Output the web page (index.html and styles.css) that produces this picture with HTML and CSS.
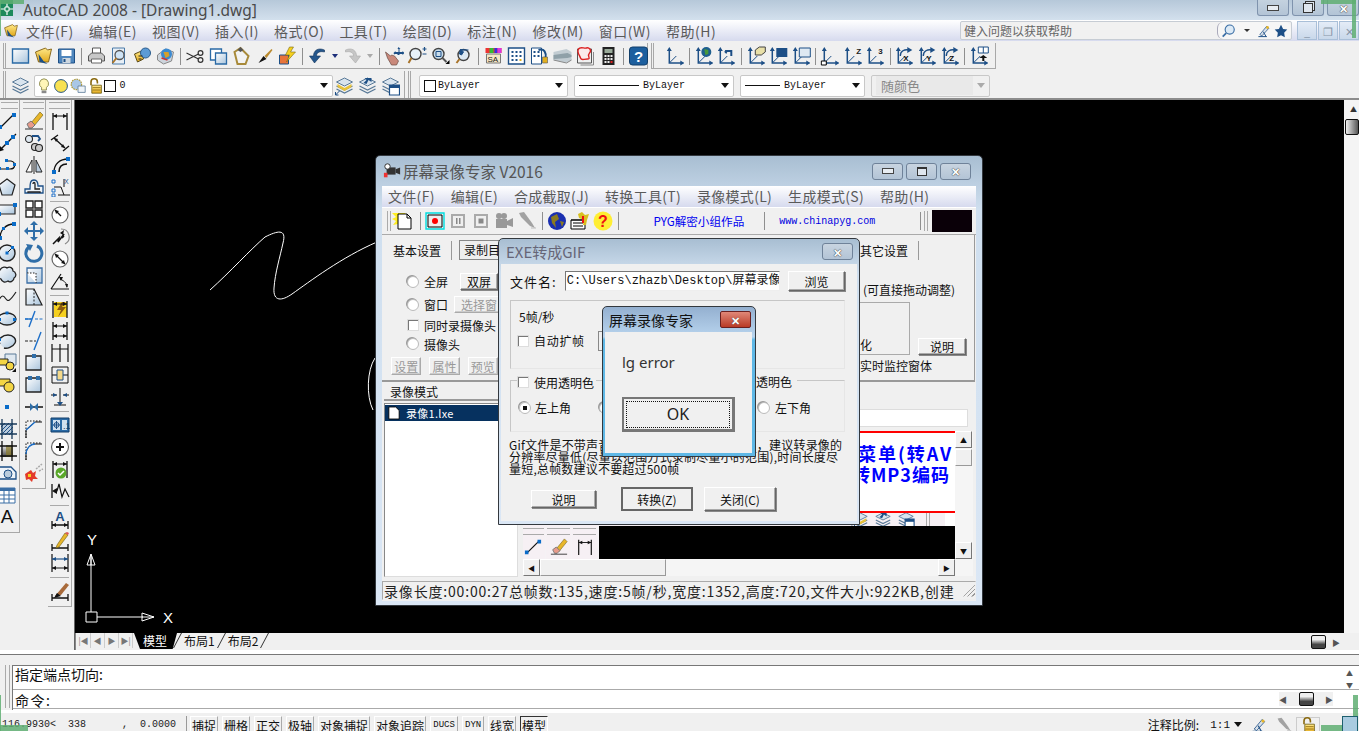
FILE: index.html
```html
<!DOCTYPE html>
<html lang="zh">
<head>
<meta charset="UTF-8">
<title>AutoCAD 2008 - [Drawing1.dwg]</title>
<link rel="stylesheet" href="styles.css">
</head>
<body>
<svg class="sprite" width="0" height="0">
  <defs>
    <linearGradient id="gb" x1="0" y1="0" x2="1" y2="1"><stop offset="0" stop-color="#fff"/><stop offset="1" stop-color="#a9c4dc"/></linearGradient>
    <linearGradient id="gy" x1="0" y1="0" x2="0" y2="1"><stop offset="0" stop-color="#ffe98a"/><stop offset="1" stop-color="#e2a91c"/></linearGradient>
    <linearGradient id="gk" x1="0" y1="0" x2="0" y2="1"><stop offset="0" stop-color="#f2f2f2"/><stop offset=".5" stop-color="#999"/><stop offset="1" stop-color="#444"/></linearGradient>
    <symbol id="cad" viewBox="0 0 13 16"><path d="M0 0h13v16H0z" fill="#1d8a5c"/><path d="M0 9h13M7 3v12" stroke="#fff" stroke-width="1.200"/><path d="M5 7h4v4H5z" fill="#1d8a5c" stroke="#fff"/></symbol>
    <symbol id="new" viewBox="0 0 20 20"><path d="M2 3h16v14H2z" fill="url(#gb)" stroke="#2a6aa5" stroke-width="1.4"/></symbol>
    <symbol id="open" viewBox="0 0 20 20"><path d="M2 6l10-4 2 2 4-1-3 13H5z" fill="url(#gy)" stroke="#8a6a20"/><path d="M5 8l5 7 4 3-8-2z" fill="#1d4f86"/></symbol>
    <symbol id="save" viewBox="0 0 20 20"><path d="M2 3h16v14H2z" fill="#4f86bd" stroke="#1d4f86"/><path d="M5 4h10v6H5z" fill="#fff"/><path d="M6 12h8v5H6z" fill="#cfd8e0"/><path d="M7 13h2v3H7z" fill="#1d4f86"/></symbol>
    <symbol id="print" viewBox="0 0 20 20"><path d="M6 2h8v6H6z" fill="#fff" stroke="#555"/><path d="M2 10l3-3h10l3 3v5H2z" fill="#c7c7c7" stroke="#555"/><path d="M5 13h10v4H5z" fill="#fff" stroke="#666"/></symbol>
    <symbol id="prev" viewBox="0 0 20 20"><path d="M3 2h12v16H3z" fill="#e8eff6" stroke="#4a7aa8"/><circle cx="10" cy="9" r="4.5" fill="#cfe4f6" stroke="#555" stroke-width="1.3"/><path d="M7 12l-4 5" stroke="#a8742a" stroke-width="2"/></symbol>
    <symbol id="publish" viewBox="0 0 20 20"><path d="M2 8l7-3 2 8-6 3z" fill="url(#gy)" stroke="#5a4a18"/><circle cx="13" cy="7" r="5" fill="#5c9bd6" stroke="#2a5c8c"/><path d="M6 10h4M6 13h3" stroke="#222"/></symbol>
    <symbol id="dwf" viewBox="0 0 20 20"><path d="M2 9l8-6 8 3-2 9-8 3-6-4z" fill="#cdd5dd" stroke="#888"/><circle cx="11" cy="8" r="5.5" fill="#3c8ad0"/><path d="M8 6l5 0 1 4-4 2z" fill="#d8a02a"/><path d="M6 12l6 2" stroke="#c33" stroke-width="1.5"/></symbol>
    <symbol id="cut" viewBox="0 0 20 20" fill="none" stroke="#333" stroke-width="1.2"><circle cx="15" cy="7" r="2.4"/><circle cx="15" cy="14" r="2.4"/><path d="M13 8L1 14M13 13L1 7"/></symbol>
    <symbol id="copy" viewBox="0 0 20 20"><path d="M2 3h11v11H2z" fill="#fff" stroke="#2a6aa5" stroke-width="1.3"/><path d="M7 7h11v11H7z" fill="url(#gb)" stroke="#2a6aa5" stroke-width="1.3"/></symbol>
    <symbol id="paste" viewBox="0 0 20 20"><path d="M3 6l6-4 8 8-3 8H6z" fill="#f3f3f3" stroke="#a88a3a" stroke-width="2"/><path d="M6 4l3-3 3 3-3 2z" fill="#555"/></symbol>
    <symbol id="brush" viewBox="0 0 20 20"><path d="M10 10l7-7 1 1-6 8z" fill="#b9892e"/><path d="M4 17l5-7 3 3z" fill="#111"/></symbol>
    <symbol id="match" viewBox="0 0 20 20"><path d="M2 9h9v9H2z" fill="#e8743a" stroke="#1d4f86"/><path d="M12 1l-4 8h4l-3 7 9-10h-5l3-5z" fill="#f5d020" stroke="#7a6a10" stroke-width=".6"/></symbol>
    <symbol id="undo" viewBox="0 0 20 20"><path d="M17 4c-7-3-11 1-11 6H2l5 7 6-7H9c0-4 4-5 8-4z" fill="#24568c" stroke="#12345a" stroke-width=".6"/></symbol>
    <symbol id="redo" viewBox="0 0 20 20"><path d="M3 4c7-3 11 1 11 6h4l-5 7-6-7h4c0-4-4-5-8-4z" fill="#c6c6c6" stroke="#aaa" stroke-width=".6"/></symbol>
    <symbol id="pan" viewBox="0 0 20 20"><path d="M1 6l5 4 1-1 3 1 4 5-2 4H7L3 12z" fill="#c9897b" stroke="#6a4a44" stroke-width=".7"/><path d="M14 1l2 2h-1v3h3V5l2 2-2 2V8h-3v1h-2V8h-3v1L9 7l2-2v1h3V3h-1z" fill="#1d4f86"/></symbol>
    <symbol id="zrt" viewBox="0 0 20 20"><circle cx="8" cy="8" r="5.5" fill="#e7f1f9" stroke="#444" stroke-width="1.4"/><path d="M4 12l-3 5" stroke="#a8742a" stroke-width="2"/><path d="M15 3h4M17 1v4M15 8h4" stroke="#1d4f86" stroke-width="1.2"/></symbol>
    <symbol id="zwin" viewBox="0 0 20 20"><circle cx="8" cy="8" r="5.5" fill="#c9dcea" stroke="#444" stroke-width="1.4"/><path d="M5.500 5.500h5v5h-5z" fill="none" stroke="#1d4f86"/><path d="M12 12l4 4" stroke="#555" stroke-width="2"/><path d="M15 18h4v-4z" fill="#000"/></symbol>
    <symbol id="zprev" viewBox="0 0 20 20"><circle cx="10" cy="9" r="5.500" fill="#dce9f3" stroke="#444" stroke-width="1.4"/><path d="M6 13l-3 4" stroke="#a8742a" stroke-width="2"/><path d="M15 4H8l2 2-2 3-2-1 1-5" fill="#1d4f86" stroke="#1d4f86"/></symbol>
    <symbol id="props" viewBox="0 0 20 20"><path d="M2 2h16v5H2z" fill="#e33"/><path d="M6 2h4v5H6z" fill="#3b3"/><path d="M11 2h3v5h-3z" fill="#33d"/><path d="M14 2h4v5h-4z" fill="#d3d"/><path d="M3 8h14v9H3z" fill="#f6e7c5" stroke="#777"/><text x="4" y="16" font-size="8" font-family="Liberation Sans" fill="#222">SA</text></symbol>
    <symbol id="sheet" viewBox="0 0 20 20"><path d="M2 2h16v16H2z" fill="#fff" stroke="#1d4f86" stroke-width="1.4"/><path d="M5 5h2v2H5zM9 5h2v2H9zM13 5h2v2h-2zM5 9h2v2H5zM9 9h2v2H9zM13 9h2v2h-2zM5 13h2v2H5zM9 13h2v2H9z" fill="#1d4f86"/><path d="M13 13h2v2h-2z" fill="#e3b020"/></symbol>
    <symbol id="tool" viewBox="0 0 20 20"><path d="M2 2h10v16H2z" fill="#fff" stroke="#1d4f86"/><path d="M4 5h2v2H4zM8 5h2v2H8zM4 9h2v2H4zM8 9h2v2H8z" fill="#1d4f86"/><path d="M9 4c6-2 8 3 7 8" fill="none" stroke="#1d4f86" stroke-width="2"/><path d="M13 11h5v6h-5z" fill="#e3b020" stroke="#555" stroke-width=".6"/></symbol>
    <symbol id="pipe" viewBox="0 0 20 20"><path d="M1 6l13-3 5 3v8l-5 3-13-3z" fill="#c2ccd2"/><path d="M1 9l14-2 4 2v2l-4 1-14 1z" fill="#8fa0a8"/><path d="M1 14l13 3 5-3" stroke="#8a8a8a" fill="none"/></symbol>
    <symbol id="markup" viewBox="0 0 20 20"><path d="M2 3h14v14H2z" fill="none" stroke="#555"/><path d="M18 6v13H5" fill="none" stroke="#888"/><path d="M3 3c2-3 6 0 8-1s6 2 3 5 2 6-2 6-6 2-7-1-4-6-2-9z" fill="#fbe9e9" stroke="#d22" stroke-width="1.4"/></symbol>
    <symbol id="calc" viewBox="0 0 20 20"><path d="M4 1h12v18H4z" fill="#222"/><path d="M6 3h8v4H6z" fill="#9a9"/><path d="M6 9h2v2H6zM9 9h2v2H9zM12 9h2v2h-2zM6 12h2v2H6zM9 12h2v2H9zM12 12h2v2h-2zM6 15h2v2H6zM9 15h2v2H9z" fill="#eee"/><path d="M12 15h2v2h-2z" fill="#d22"/></symbol>
    <symbol id="help" viewBox="0 0 20 20"><rect x="1" y="1" width="18" height="18" rx="3" fill="#1d5f9e" stroke="#123f6a"/><text x="10" y="16" font-size="15" font-weight="700" font-family="Liberation Sans" text-anchor="middle" fill="#fff">?</text></symbol>
    <symbol id="ucs" viewBox="0 0 20 20"><path d="M4 3v14h14" fill="none" stroke="#1d4f86" stroke-width="1.500"/><path d="M4 1l-2.500 4h5zM19 17l-4-2.500v5z" fill="#1d4f86"/><path d="M4 17l7-7" stroke="#1d4f86"/></symbol>
    <symbol id="ucsw" viewBox="0 0 20 20"><use href="#ucs"/><circle cx="12" cy="6" r="5" fill="#1f5f8f"/><path d="M10 3l4 1 0 4-3 1z" fill="#4a9a3a"/></symbol>
    <symbol id="ucsb" viewBox="0 0 20 20"><use href="#ucs"/><path d="M16 10V4H9l-1 2 2 2 1-2h3v4zM7 8L11 5" fill="#1d4f86"/></symbol>
    <symbol id="ucsc" viewBox="0 0 20 20"><use href="#ucs"/><path d="M9 9V4l4-3h6v5l-4 3z" fill="#e9e0a8" stroke="#444"/></symbol>
    <symbol id="ucsf" viewBox="0 0 20 20"><use href="#ucs"/><path d="M8 2h11v9H8z" fill="#1d4f86"/></symbol>
    <symbol id="ucsv" viewBox="0 0 20 20"><use href="#ucs"/><path d="M8 2h11v9H8z" fill="#dfe9f2" stroke="#1d4f86"/></symbol>
    <symbol id="ucso" viewBox="0 0 20 20"><use href="#ucs"/><path d="M1 15h5v4H1z" fill="#fff" stroke="#000"/></symbol>
    <symbol id="ucsz" viewBox="0 0 20 20"><use href="#ucs"/><text x="13" y="8" font-size="8" font-weight="700" font-family="Liberation Sans" fill="#222">Z</text></symbol>
    <symbol id="ucs3" viewBox="0 0 20 20"><use href="#ucs"/><text x="13" y="8" font-size="8" font-weight="700" font-family="Liberation Sans" fill="#222">3</text></symbol>
    <symbol id="rotx" viewBox="0 0 20 20"><use href="#ucs"/><path d="M6 10c0-5 4-7 9-6" fill="none" stroke="#1d4f86" stroke-width="1.400"/><path d="M13 1l5 3-5 3z" fill="#1d4f86"/><text x="9" y="15" font-size="8" font-weight="700" font-family="Liberation Sans" fill="#111">X</text></symbol>
    <symbol id="roty" viewBox="0 0 20 20"><use href="#ucs"/><path d="M6 10c0-5 4-7 9-6" fill="none" stroke="#1d4f86" stroke-width="1.400"/><path d="M13 1l5 3-5 3z" fill="#1d4f86"/><text x="9" y="15" font-size="8" font-weight="700" font-family="Liberation Sans" fill="#111">Y</text></symbol>
    <symbol id="rotz" viewBox="0 0 20 20"><use href="#ucs"/><path d="M6 10c0-5 4-7 9-6" fill="none" stroke="#1d4f86" stroke-width="1.400"/><path d="M13 1l5 3-5 3z" fill="#1d4f86"/><text x="9" y="15" font-size="8" font-weight="700" font-family="Liberation Sans" fill="#111">Z</text></symbol>
    <symbol id="ucsm" viewBox="0 0 20 20"><use href="#ucs"/><path d="M9 1h10v6H9zM14 1v6" fill="#fff" stroke="#1d4f86"/><path d="M14 9l4 3h-3v3h-2v-3h-3z" fill="#111"/></symbol>
    <symbol id="stack" viewBox="0 0 20 20"><path d="M2 6l8-4 8 4-8 4z" fill="#d9e4ee" stroke="#5a7a98"/><path d="M2 10l8 4 8-4M2 13l8 4 8-4" fill="none" stroke="#5a7a98" stroke-width="1.300"/></symbol>
    <symbol id="bulb" viewBox="0 0 20 20"><path d="M10 1a6 6 0 0 0-3 11v3h6v-3a6 6 0 0 0-3-11z" fill="#fff6b8" stroke="#7a7a3a"/><path d="M7 16h6v3H7z" fill="#8a8a8a"/></symbol>
    <symbol id="sun" viewBox="0 0 20 20"><circle cx="10" cy="10" r="8" fill="#f8e152" stroke="#1d4f86" stroke-width="1.200"/></symbol>
    <symbol id="freeze" viewBox="0 0 20 20"><circle cx="8" cy="8" r="6.500" fill="#a9c7e6" stroke="#b09a3a" stroke-width="1.500" stroke-dasharray="2 1"/><path d="M10 10h9v8h-9z" fill="#eef3f8" stroke="#5a7a98"/></symbol>
    <symbol id="lock" viewBox="0 0 20 20"><path d="M5 9V5a4 4 0 0 1 8 0v2" fill="none" stroke="#8a6a10" stroke-width="2"/><path d="M6 9h12v10H6z" fill="url(#gy)" stroke="#6a5a10"/><path d="M7 12h10M7 15h10" stroke="#8a6a10"/></symbol>
    <symbol id="laycur" viewBox="0 0 20 20"><use href="#stack"/><path d="M3 8l7 4 7-4v3l-7 4-7-4z" fill="#e8c33a"/><path d="M1 19l4-4M1 16v3h3" stroke="#1d4f86" fill="none"/></symbol>
    <symbol id="laypre" viewBox="0 0 20 20"><use href="#stack"/><path d="M14 2H7l2 2-3 3 3 1 2-4 3 2z" fill="#1d4f86"/></symbol>
    <symbol id="laywin" viewBox="0 0 20 20"><use href="#stack"/><path d="M9 9h10v10H9z" fill="#fff" stroke="#1d4f86" stroke-width="1.200"/><path d="M9 9h10v3H9z" fill="#1d4f86"/></symbol>
    <symbol id="line" viewBox="0 0 20 20"><path d="M4 16L16 4" stroke="#111" stroke-width="1.300"/><path d="M1 14h4v4H1zM15 2h4v4h-4z" fill="#0a6cc8"/></symbol>
    <symbol id="ray" viewBox="0 0 20 20"><path d="M1 19L19 1" stroke="#111" stroke-width="1.300"/><path d="M8 8h4v4H8zM14 2h4v4h-4z" fill="#0a6cc8"/><path d="M1 19l2-6 4 4z" fill="#111"/></symbol>
    <symbol id="pline" viewBox="0 0 20 20"><path d="M3 14h10c6 0 6-7 1-8l-5 0" fill="none" stroke="#111" stroke-width="1.200"/><path d="M1 12h3v3H1zM9 12h3v3H9zM8 4h3v3H8zM16 8h3v3h-3z" fill="#0a6cc8"/></symbol>
    <symbol id="penta" viewBox="0 0 20 20"><path d="M10 2l8 6-3 10H5L2 8z" fill="url(#gb)" stroke="#222" stroke-width="1.200"/></symbol>
    <symbol id="rect" viewBox="0 0 20 20"><path d="M2 6h16v9H2z" fill="url(#gb)" stroke="#222" stroke-width="1.200"/><path d="M16 4h4v4h-4zM0 13h4v4H0z" fill="#0a6cc8"/></symbol>
    <symbol id="arc" viewBox="0 0 20 20"><path d="M3 17C3 9 9 3 17 3" fill="none" stroke="#111" stroke-width="1.300"/><path d="M1 15h4v4H1zM15 1h4v4h-4zM5 6h3v3H5z" fill="#0a6cc8"/></symbol>
    <symbol id="circle" viewBox="0 0 20 20"><circle cx="10" cy="10" r="8" fill="url(#gb)" stroke="#222" stroke-width="1.400"/><path d="M10 10l5-5" stroke="#111"/><path d="M8.500 8.500h3v3h-3zM14 3h3v3h-3z" fill="#0a6cc8"/></symbol>
    <symbol id="cloud" viewBox="0 0 20 20"><path d="M3 5c2-4 6-3 7-2 3-2 6 0 6 3 3 1 4 5 1 7 0 3-4 5-6 3-3 2-6 1-7-2-3-1-4-6-1-9z" fill="url(#gb)" stroke="#222" stroke-width="1.300"/></symbol>
    <symbol id="spline" viewBox="0 0 20 20"><path d="M1 15c4-9 6-6 8-3s4 2 10-7" fill="none" stroke="#222" stroke-width="1.200"/></symbol>
    <symbol id="ellipse" viewBox="0 0 20 20"><ellipse cx="10" cy="10" rx="9" ry="6" fill="url(#gb)" stroke="#222" stroke-width="1.400"/><path d="M1 9h3v3H1zM16 9h3v3h-3zM8.500 2.500h3v3h-3z" fill="#0a6cc8"/></symbol>
    <symbol id="earc" viewBox="0 0 20 20"><path d="M3 13C0 8 6 4 11 4s9 4 7 8-8 6-11 5" fill="url(#gb)" stroke="#222" stroke-width="1.400"/><path d="M1 7h3v3H1z" fill="#0a6cc8"/></symbol>
    <symbol id="insert" viewBox="0 0 20 20"><path d="M8 1h11v11H8z" fill="#dfe8f0" stroke="#5a7a98"/><path d="M1 6h10v6H1z" fill="#f3d544" stroke="#222"/><circle cx="13" cy="13" r="4" fill="#f3d544" stroke="#222"/><path d="M15 19h4v-4z" fill="#111"/></symbol>
    <symbol id="block" viewBox="0 0 20 20"><path d="M1 4h12v7H1z" fill="#f3d544" stroke="#222"/><circle cx="12" cy="12" r="5" fill="#f3d544" stroke="#222"/><path d="M0 1h3v3H0z" fill="#0a6cc8"/></symbol>
    <symbol id="point" viewBox="0 0 20 20"><path d="M8 8h4v4H8z" fill="#0a6cc8"/></symbol>
    <symbol id="hatch" viewBox="0 0 20 20"><path d="M4 4h12v12H4z" fill="#b9cbdc"/><path d="M4 8l4-4M4 12l8-8M4 16L16 4M8 16l8-8M12 16l4-4" stroke="#1d4f86"/><path d="M5 0v20M15 0v20M0 5h20M0 15h20" stroke="#1a3a5a" stroke-width="1.300"/></symbol>
    <symbol id="grad" viewBox="0 0 20 20"><path d="M4 4h12v12H4z" fill="url(#gk)"/><path d="M9 4h7v12H9z" fill="#8a7a2a" opacity=".7"/><path d="M5 0v20M15 0v20M0 5h20M0 15h20" stroke="#111" stroke-width="1.300"/></symbol>
    <symbol id="region" viewBox="0 0 20 20"><path d="M1 4h13l5 5v7H1z" fill="#eef3f8" stroke="#1d4f86" stroke-width="1.300"/><circle cx="11" cy="11" r="4" fill="#b9cbdc" stroke="#1d4f86"/></symbol>
    <symbol id="table" viewBox="0 0 20 20"><path d="M2 3h16v15H2z" fill="#fff" stroke="#3a6ea5"/><path d="M2 3h16v3H2z" fill="#3a6ea5"/><path d="M7 6v12M12 6v12M2 10h16M2 14h16" stroke="#3a6ea5"/></symbol>
    <symbol id="erase" viewBox="0 0 20 20"><path d="M7 12L16 1l3 3-9 11z" fill="#e8b62a" stroke="#6a5a10" stroke-width=".6"/><path d="M3 13l4-3 4 4-3 3H5z" fill="#e89a8a" stroke="#777"/><path d="M1 18h18" stroke="#333"/></symbol>
    <symbol id="copyc" viewBox="0 0 20 20" fill="#dfe8f0" stroke="#222" stroke-width="1.100"><circle cx="5" cy="6" r="3.500"/><circle cx="11" cy="14" r="3.500" fill="#c9c9c9"/><circle cx="15" cy="15" r="3.500" fill="#c9c9c9"/><path d="M8 3h6l2 3-2 2" fill="none" stroke="#1d4f86" stroke-width="1.800"/></symbol>
    <symbol id="mirror" viewBox="0 0 20 20"><path d="M10 1v18" stroke="#222"/><path d="M8 5v12H2z" fill="#fff" stroke="#222"/><path d="M12 5v12h6z" fill="#b9cbdc" stroke="#222"/></symbol>
    <symbol id="offset" viewBox="0 0 20 20" fill="none" stroke="#1d4f86" stroke-width="1.300"><path d="M1 12h5c0-5 0-9 4-9s4 4 4 6h5v7H1z" fill="#eef3f8"/><path d="M4 16v-1h12v1" stroke="#222"/><path d="M9 7c0-2 2-2 2 0v5h5" stroke="#222"/></symbol>
    <symbol id="array" viewBox="0 0 20 20" fill="#fff" stroke="#222" stroke-width="1.400"><path d="M2 2h7v7H2zM11 2h7v7h-7zM2 11h7v7H2zM11 11h7v7h-7z"/></symbol>
    <symbol id="move" viewBox="0 0 20 20"><path d="M10 0l4 4h-3v5h5V6l4 4-4 4v-3h-5v5h3l-4 4-4-4h3v-5H4v3l-4-4 4-4v3h5V4H6z" fill="#2f6ea8"/></symbol>
    <symbol id="rotate" viewBox="0 0 20 20"><path d="M5 4a8 8 0 1 0 8-1" fill="none" stroke="#2f6ea8" stroke-width="3"/><path d="M2 1l7 1-3 6z" fill="#2f6ea8"/></symbol>
    <symbol id="scale" viewBox="0 0 20 20"><path d="M3 3h15v15H3z" fill="url(#gb)" stroke="#3a6ea5" stroke-width="1.300"/><path d="M3 8h9v10" fill="#fff" stroke="#222" stroke-dasharray="1.500 1.500"/></symbol>
    <symbol id="stretch" viewBox="0 0 20 20"><path d="M2 2h8l8 16H2z" fill="url(#gb)" stroke="#222" stroke-width="1.200"/><path d="M10 2v16" stroke="#222" stroke-dasharray="2 1.500"/></symbol>
    <symbol id="trim" viewBox="0 0 20 20"><path d="M1 10h6M11 10h8" stroke="#1d6fc8" stroke-width="1.200" stroke-dasharray="3 1.500"/><path d="M5 18L11 2" stroke="#1d6fc8" stroke-width="1.400"/><path d="M1 10h7" stroke="#1d6fc8" stroke-width="1.400"/></symbol>
    <symbol id="extend" viewBox="0 0 20 20"><path d="M1 10h11" stroke="#222" stroke-dasharray="3 1.500"/><path d="M10 19L17 1" stroke="#1d6fc8" stroke-width="1.400"/></symbol>
    <symbol id="brk" viewBox="0 0 20 20"><path d="M2 3h15v14H2z" fill="url(#gb)" stroke="#222" stroke-width="1.300"/><path d="M8 1h4v4H8z" fill="#2f6ea8"/></symbol>
    <symbol id="brk2" viewBox="0 0 20 20"><path d="M2 3h15v14H2z" fill="url(#gb)" stroke="#222" stroke-width="1.300"/><path d="M4 1h4v4H4zM12 1h4v4h-4z" fill="#2f6ea8"/></symbol>
    <symbol id="join" viewBox="0 0 20 20"><path d="M1 10h18" stroke="#111" stroke-width="1.500"/><path d="M6 6l4 4-4 4zM14 6l-4 4 4 4z" fill="#2f6ea8"/></symbol>
    <symbol id="chamfer" viewBox="0 0 20 20" fill="none"><path d="M2 19V2h16" stroke="#111" stroke-dasharray="1.500 1.500"/><path d="M2 19V11l9-8h7" stroke="#111"/><path d="M2 11l9-8" stroke="#1d6fc8" stroke-width="1.400"/></symbol>
    <symbol id="fillet" viewBox="0 0 20 20" fill="none"><path d="M2 19V2h16" stroke="#111" stroke-dasharray="1.500 1.500"/><path d="M2 19v-6C2 8 6 3 11 3h7" stroke="#111"/><path d="M2 13C2 8 6 3 11 3" stroke="#1d6fc8" stroke-width="1.400"/></symbol>
    <symbol id="explode" viewBox="0 0 20 20"><path d="M1 11l6-4 2 3 3-2-1 5 3 3-5 0-1 3-3-3-3 1z" fill="#e33b2a"/><path d="M4 11h3v3H4z" fill="#f5d020"/><path d="M12 6l6-5M15 8l4-2" stroke="#aaa" stroke-width="1.500" stroke-dasharray="2 1"/></symbol>
    <symbol id="dlin" viewBox="0 0 20 20"><path d="M3 2v17M17 2v17" stroke="#111" stroke-width="1.300"/><path d="M3 5h14" stroke="#111"/><path d="M3 5l4-2v4zM17 5l-4-2v4z" fill="#111"/></symbol>
    <symbol id="dali" viewBox="0 0 20 20"><path d="M1 7l7-5M13 18l6-5M4 5l11 10" stroke="#111" stroke-width="1.300"/><path d="M4 5l4 1-2 3zM15 15l-4-1 2-3z" fill="#111"/></symbol>
    <symbol id="darc" viewBox="0 0 20 20"><path d="M4 17C4 9 10 4 18 4" fill="none" stroke="#111" stroke-width="1.300"/><path d="M9 17c0-5 3-8 8-8" fill="none" stroke="#111" stroke-width="1.600"/><path d="M2 15h4v4H2zM16 2h4v4h-4z" fill="#0a6cc8"/></symbol>
    <symbol id="dord" viewBox="0 0 20 20"><path d="M8 18h12M14 18l-3-8h-7M14 10V2" fill="none" stroke="#111"/><path d="M2 3h3v3H2zM2 12h3v3H2zM2 17h3v3H2z" fill="none" stroke="#1d6fc8"/><text x="14" y="7" font-size="7" font-family="Liberation Sans" fill="#1d4f86">X</text></symbol>
    <symbol id="drad" viewBox="0 0 20 20"><circle cx="10" cy="10" r="8" fill="#fff" stroke="#666" stroke-width="1.200"/><path d="M11 11L5 5" stroke="#111" stroke-width="1.300"/><path d="M5 5l4 1-3 3z" fill="#111"/></symbol>
    <symbol id="djog" viewBox="0 0 20 20"><path d="M11 2a8 8 0 0 1 4 15" fill="none" stroke="#888" stroke-width="1.200"/><path d="M3 17l6-6-1 4 6-8-2 4 2-2" fill="none" stroke="#111" stroke-width="1.500"/><path d="M14 3l-1 5-3-2z" fill="#111"/></symbol>
    <symbol id="ddia" viewBox="0 0 20 20"><circle cx="10" cy="10" r="8" fill="#fff" stroke="#666" stroke-width="1.200"/><path d="M5 5l10 10" stroke="#111" stroke-width="1.300"/><path d="M5 5l4 1-3 3zM15 15l-4-1 3-3z" fill="#111"/></symbol>
    <symbol id="dang" viewBox="0 0 20 20"><path d="M1 18h18M1 18L11 3" fill="none" stroke="#111" stroke-width="1.200"/><path d="M10 8c5 2 7 5 7 8" fill="none" stroke="#111"/><path d="M9 6l4 0-2 4zM17 17l-2-4 3 0z" fill="#111"/></symbol>
    <symbol id="dqk" viewBox="0 0 20 20"><path d="M4 3h13v15H4z" fill="#f5d020"/><path d="M12 3L7 11h4l-3 7 8-10h-4l3-5z" fill="#8a5a10"/><use href="#dlin"/></symbol>
    <symbol id="dbase" viewBox="0 0 20 20"><path d="M3 1v18M17 1v18" stroke="#111" stroke-width="1.300"/><path d="M3 5h14M3 15h14" stroke="#111"/><path d="M3 5l4-2v4zM17 5l-4-2v4zM3 15l4-2v4zM17 15l-4-2v4z" fill="#111"/></symbol>
    <symbol id="dcont" viewBox="0 0 20 20"><path d="M2 1v18M10 1v18M18 1v18" stroke="#111" stroke-width="1.200"/><path d="M2 6h16" stroke="#111"/></symbol>
    <symbol id="dspace" viewBox="0 0 20 20"><path d="M2 2h16M2 18h16M2 10h16" stroke="#111"/><path d="M2 2v16M18 2v16" stroke="#111"/><path d="M7 5h6v10H7z" fill="#f5d98a" stroke="#1d4f86"/></symbol>
    <symbol id="dbrk" viewBox="0 0 20 20"><path d="M10 1v15M4 18h12M1 8h6M13 8h6" stroke="#111"/><path d="M10 19l-3-4h6zM7 8l-4-2v4zM13 8l4-2v4z" fill="#1d4f86"/></symbol>
    <symbol id="dtol" viewBox="0 0 20 20"><path d="M1 3h18v14H1z" fill="#2a6aa5" stroke="#123f6a"/><path d="M3 5h7v10H3zM12 5h5v10h-5z" fill="#cfe0ef"/><circle cx="6.500" cy="10" r="2.500" fill="none" stroke="#1d4f86"/><path d="M6.500 6v8M3 10h7" stroke="#1d4f86"/><text x="13" y="14" font-size="9" font-family="Liberation Sans" fill="#123f6a">.1</text></symbol>
    <symbol id="dctr" viewBox="0 0 20 20"><circle cx="10" cy="10" r="8.500" fill="#fff" stroke="#666" stroke-width="1.200"/><path d="M6 10h8M10 6v8" stroke="#111" stroke-width="2"/></symbol>
    <symbol id="dchk" viewBox="0 0 20 20"><use href="#dlin"/><circle cx="11" cy="14" r="5.500" fill="#5aa82a"/><path d="M8 14l2 2 4-4" fill="none" stroke="#fff" stroke-width="1.500"/></symbol>
    <symbol id="djl" viewBox="0 0 20 20"><path d="M2 3v14" stroke="#111" stroke-width="1.300"/><path d="M2 10l5-3v6z" fill="#111"/><path d="M5 10h2l2-7 3 13 3-8 4 8" fill="none" stroke="#111" stroke-width="1.200"/></symbol>
    <symbol id="dtxt" viewBox="0 0 20 20"><path d="M2 12v8M18 12v8M2 16h16" stroke="#111" stroke-width="1.300"/><path d="M2 16l4-2v4zM18 16l-4-2v4z" fill="#111"/><text x="10" y="12" font-size="13" font-weight="700" font-family="Liberation Sans" text-anchor="middle" fill="#1d4f86">A</text></symbol>
    <symbol id="dped" viewBox="0 0 20 20"><path d="M2 13v7M18 13v7M2 17h16" stroke="#111" stroke-width="1.300"/><path d="M7 14L15 2l3 2-9 12-3 1z" fill="#e8b62a" stroke="#6a5a10" stroke-width=".6"/><path d="M15 2l3 2 1-2-2-1z" fill="#d55"/></symbol>
    <symbol id="dupd" viewBox="0 0 20 20"><path d="M2 1v18M18 1v18M2 15h16" stroke="#111" stroke-width="1.200"/><path d="M2 6h16" stroke="#1d4f86" stroke-width="1.200"/><path d="M2 6l4-2v4zM18 6l-4-2v4z" fill="#1d4f86"/><path d="M2 15l4-2v4zM18 15l-4-2v4z" fill="#111"/></symbol>
    <symbol id="dsty" viewBox="0 0 20 20"><path d="M2 13v7M18 13v7M2 17h16" stroke="#111" stroke-width="1.300"/><path d="M5 15L16 2l3 2-8 10z" fill="#a86a3a"/><path d="M4 17l3-5 4 3z" fill="#111"/></symbol>
    <symbol id="sat" viewBox="0 0 20 20"><path d="M4 15L14 3l3 3-10 11z" fill="#d8e0e8" stroke="#1d4f86"/><path d="M2 18h12M9 11l4 7" stroke="#1d4f86" stroke-width="1.400"/><circle cx="15" cy="5" r="2" fill="#e8b62a"/></symbol>
    <symbol id="star" viewBox="0 0 20 20"><path d="M10 1l3 6 6 1-4.500 4.500 1 6.500L10 16l-5.500 3 1-6.500L1 8l6-1z" fill="#1d4f86"/></symbol>
    <symbol id="mag" viewBox="0 0 20 20"><circle cx="11" cy="8" r="6.500" fill="#dceaf6" stroke="#3a6ea5" stroke-width="1.600"/><path d="M6 13l-5 5" stroke="#3a6ea5" stroke-width="2.500"/></symbol>
    <symbol id="r-new" viewBox="0 0 24 20"><path d="M1 2l4 4-4 2 4 2-3 4 5-1 2 5 3-2 6 2V8l-4-6z" fill="#ffee22"/><path d="M7 3h9l4 4v11H7z" fill="#fff" stroke="#000"/><path d="M16 3v4h4" fill="none" stroke="#000"/></symbol>
    <symbol id="r-rec" viewBox="0 0 20 20"><path d="M1 2h18v16H1z" fill="#eee" stroke="#00dde0" stroke-width="1.400"/><path d="M3 4h14v12H3z" fill="none" stroke="#000"/><circle cx="10" cy="10" r="3" fill="#f00"/></symbol>
    <symbol id="r-pause" viewBox="0 0 20 20"><path d="M3 3h14v14H3z" fill="#aaa"/><path d="M5 5h10v10H5z" fill="#efefef"/><path d="M8 7h1.500v6H8zM11 7h1.500v6H11z" fill="#888"/></symbol>
    <symbol id="r-stop" viewBox="0 0 20 20"><path d="M3 3h14v14H3z" fill="#aaa"/><path d="M5 5h10v10H5z" fill="#efefef"/><path d="M7.500 7.500h5v5h-5z" fill="#888"/></symbol>
    <symbol id="r-cam" viewBox="0 0 20 20"><path d="M2 8h11v9H2z" fill="#999"/><path d="M13 10l6-3v9l-6-2z" fill="#999"/><circle cx="5" cy="5" r="3" fill="#999"/><circle cx="10" cy="5" r="3" fill="#999"/></symbol>
    <symbol id="r-pen" viewBox="0 0 20 20"><path d="M2 2l5-1 8 11 3 5-5-2-9-9z" fill="#a2a2a2"/><path d="M14 17h5" stroke="#bbb"/></symbol>
    <symbol id="r-globe" viewBox="0 0 20 20"><circle cx="10" cy="10" r="9" fill="#1a2fb0"/><path d="M4 6l6-3 2 5-4 3 1 6-4-5zM13 10l4 1-2 5z" fill="#8a7a20"/></symbol>
    <symbol id="r-mail" viewBox="0 0 20 20"><path d="M1 9h14v9H1z" fill="#fff" stroke="#000"/><path d="M1 9h14M3 12h10M3 15h10" stroke="#000"/><path d="M8 3l4-2 3 3 4-1-2 6-1 5h-3l1-5-5-2z" fill="#d8c020"/><path d="M13 5v7" stroke="#e11" stroke-width="2"/></symbol>
    <symbol id="r-help" viewBox="0 0 20 20"><circle cx="10" cy="10" r="9.500" fill="#ffee33"/><text x="10" y="16" font-size="16" font-weight="700" font-family="Liberation Sans" text-anchor="middle" fill="#e11">?</text></symbol>
    <symbol id="r-cine" viewBox="0 0 20 20"><path d="M4 6h10v8H4z" fill="#333"/><path d="M14 8l5-2v8l-5-2z" fill="#333"/><circle cx="5" cy="5" r="3" fill="#fff" stroke="#222"/><path d="M1 12h4v5H1z" fill="#e33"/></symbol>
    <symbol id="doc" viewBox="0 0 14 16"><path d="M1 1h8l4 4v10H1z" fill="#fff" stroke="#000"/></symbol>
  </defs>
</svg>

<div class="app">
  <header class="titlebar">
    <svg class="cad-ic"><use href="#cad"/></svg>
    <span class="app-title">AutoCAD 2008 - [Drawing1.dwg]</span>
    <div class="caps">
      <span class="cap"><i class="g-min"></i></span>
      <span class="cap"><i class="g-res"></i></span>
      <span class="cap g-x">✕</span>
    </div>
  </header>

  <nav class="menubar">
    <svg class="doc-ic"><use href="#open"/></svg>
    <div class="menu-items">
      <span>文件(F)</span><span>编辑(E)</span><span>视图(V)</span><span>插入(I)</span><span>格式(O)</span><span>工具(T)</span><span>绘图(D)</span><span>标注(N)</span><span>修改(M)</span><span>窗口(W)</span><span>帮助(H)</span>
    </div>
    <div class="search">
      <span class="search-text">健入问题以获取帮助</span>
      <div class="search-btns">
        <svg class="mini"><use href="#mag"/></svg><b class="mini-drop"></b>
        <svg class="mini"><use href="#sat"/></svg>
        <svg class="mini"><use href="#star"/></svg>
      </div>
    </div>
    <div class="mdi">
      <span class="mdi-btn">_</span><span class="mdi-btn">❐</span><span class="mdi-btn">✕</span>
    </div>
  </nav>

  <div class="tool-row row-one">
    <div class="tb tb-std">
      <svg class="ic"><use href="#new"/></svg><svg class="ic"><use href="#open"/></svg><svg class="ic"><use href="#save"/></svg><i class="sep"></i>
      <svg class="ic"><use href="#print"/></svg><svg class="ic"><use href="#prev"/></svg><svg class="ic"><use href="#publish"/></svg><svg class="ic"><use href="#dwf"/></svg><i class="sep"></i>
      <svg class="ic"><use href="#cut"/></svg><svg class="ic"><use href="#copy"/></svg><svg class="ic"><use href="#paste"/></svg><svg class="ic"><use href="#brush"/></svg><svg class="ic"><use href="#match"/></svg><i class="sep"></i>
      <svg class="ic"><use href="#undo"/></svg><b class="drop"></b><svg class="ic"><use href="#redo"/></svg><b class="drop off"></b><i class="sep"></i>
      <svg class="ic"><use href="#pan"/></svg><svg class="ic"><use href="#zrt"/></svg><svg class="ic"><use href="#zwin"/></svg><svg class="ic"><use href="#zprev"/></svg><i class="sep"></i>
      <svg class="ic"><use href="#props"/></svg><svg class="ic"><use href="#sheet"/></svg><svg class="ic"><use href="#tool"/></svg><svg class="ic"><use href="#pipe"/></svg><svg class="ic"><use href="#markup"/></svg><svg class="ic"><use href="#calc"/></svg><i class="sep"></i>
      <svg class="ic"><use href="#help"/></svg>
    </div>
    <div class="tb tb-ucs">
      <svg class="ic"><use href="#ucs"/></svg><i class="sep"></i>
      <svg class="ic"><use href="#ucsw"/></svg><svg class="ic"><use href="#ucsb"/></svg><i class="sep"></i>
      <svg class="ic"><use href="#ucsc"/></svg><svg class="ic"><use href="#ucsf"/></svg><svg class="ic"><use href="#ucsv"/></svg><i class="sep"></i>
      <svg class="ic"><use href="#ucso"/></svg><svg class="ic"><use href="#ucsz"/></svg><svg class="ic"><use href="#ucs3"/></svg><i class="sep"></i>
      <svg class="ic"><use href="#rotx"/></svg><svg class="ic"><use href="#roty"/></svg><svg class="ic"><use href="#rotz"/></svg><i class="sep"></i>
      <svg class="ic"><use href="#ucsm"/></svg>
    </div>
  </div>

  <div class="tool-row row-two">
    <div class="tb tb-layer">
      <svg class="ic"><use href="#stack"/></svg>
      <div class="combo combo-layer">
        <svg class="st"><use href="#bulb"/></svg><svg class="st"><use href="#sun"/></svg><svg class="st"><use href="#freeze"/></svg><svg class="st"><use href="#lock"/></svg>
        <i class="swatch"></i><span class="mono">0</span><b class="drop"></b>
      </div>
      <svg class="ic"><use href="#laycur"/></svg><svg class="ic"><use href="#laypre"/></svg><svg class="ic"><use href="#laywin"/></svg>
    </div>
    <div class="tb tb-props">
      <div class="combo combo-color"><i class="swatch"></i><span class="mono">ByLayer</span><b class="drop"></b></div>
      <div class="combo combo-ltype"><i class="rule rule-long"></i><span class="mono">ByLayer</span><b class="drop"></b></div>
      <div class="combo combo-lweight"><i class="rule rule-short"></i><span class="mono">ByLayer</span><b class="drop"></b></div>
      <div class="combo combo-plot"><span class="plot-text">随颜色</span><b class="drop off"></b></div>
    </div>
  </div>

  <div class="workspace">
    <aside class="dock">
      <div class="dockbar bar-draw">
        <i class="grip-h"></i>
        <svg class="ic"><use href="#line"/></svg><svg class="ic"><use href="#ray"/></svg><svg class="ic"><use href="#pline"/></svg><svg class="ic"><use href="#penta"/></svg><svg class="ic"><use href="#rect"/></svg><svg class="ic"><use href="#arc"/></svg><svg class="ic"><use href="#circle"/></svg><svg class="ic"><use href="#cloud"/></svg><svg class="ic"><use href="#spline"/></svg><svg class="ic"><use href="#ellipse"/></svg><svg class="ic"><use href="#earc"/></svg><svg class="ic"><use href="#insert"/></svg><svg class="ic"><use href="#block"/></svg><svg class="ic"><use href="#point"/></svg><svg class="ic"><use href="#hatch"/></svg><svg class="ic"><use href="#grad"/></svg><svg class="ic"><use href="#region"/></svg><svg class="ic"><use href="#table"/></svg>
        <span class="ic-a">A</span>
      </div>
      <div class="dockbar bar-modify">
        <i class="grip-h"></i>
        <svg class="ic"><use href="#erase"/></svg><svg class="ic"><use href="#copyc"/></svg><svg class="ic"><use href="#mirror"/></svg><svg class="ic"><use href="#offset"/></svg><svg class="ic"><use href="#array"/></svg><svg class="ic"><use href="#move"/></svg><svg class="ic"><use href="#rotate"/></svg><svg class="ic"><use href="#scale"/></svg><svg class="ic"><use href="#stretch"/></svg><svg class="ic"><use href="#trim"/></svg><svg class="ic"><use href="#extend"/></svg><svg class="ic"><use href="#brk"/></svg><svg class="ic"><use href="#brk2"/></svg><svg class="ic"><use href="#join"/></svg><svg class="ic"><use href="#chamfer"/></svg><svg class="ic"><use href="#fillet"/></svg><svg class="ic"><use href="#explode"/></svg>
      </div>
      <div class="dockbar bar-dim">
        <i class="grip-h"></i>
        <svg class="ic"><use href="#dlin"/></svg><svg class="ic"><use href="#dali"/></svg><svg class="ic"><use href="#darc"/></svg><svg class="ic"><use href="#dord"/></svg><i class="sep-h"></i>
        <svg class="ic"><use href="#drad"/></svg><svg class="ic"><use href="#djog"/></svg><svg class="ic"><use href="#ddia"/></svg><svg class="ic"><use href="#dang"/></svg><i class="sep-h"></i>
        <svg class="ic"><use href="#dqk"/></svg><svg class="ic"><use href="#dbase"/></svg><svg class="ic"><use href="#dcont"/></svg><svg class="ic"><use href="#dspace"/></svg><svg class="ic"><use href="#dbrk"/></svg><i class="sep-h"></i>
        <svg class="ic"><use href="#dtol"/></svg><svg class="ic"><use href="#dctr"/></svg><svg class="ic"><use href="#dchk"/></svg><svg class="ic"><use href="#djl"/></svg><i class="sep-h"></i>
        <svg class="ic"><use href="#dtxt"/></svg><svg class="ic"><use href="#dped"/></svg><svg class="ic"><use href="#dupd"/></svg><i class="sep-h"></i>
        <svg class="ic"><use href="#dsty"/></svg>
      </div>
    </aside>

    <main class="drawing">
      <div class="view-row">
        <div class="canvas">
          <svg class="geometry" width="1269" height="533" viewBox="0 0 1269 533">
            <path d="M135 190C155 172 175 150 190 137c12-6 22-9 18 6-3 14-8 30-9 45-1 14 8 13 18 6 17-12 50-37 85-52" fill="none" stroke="#fff"/>
            <path d="M300 258c-8 12-9 38-2 52" fill="none" stroke="#fff"/>
            <path d="M16 512V455" stroke="#fff"/>
            <path d="M16 454l-4 11h8zM16 454v11" fill="none" stroke="#fff"/>
            <path d="M11 512h11v10H11z" fill="none" stroke="#fff"/>
            <path d="M22 517h46" stroke="#fff"/>
            <path d="M79 517l-12-4v8zM67 517h12" fill="none" stroke="#fff"/>
            <text x="12" y="445" class="axis">Y</text>
            <text x="88" y="523" class="axis">X</text>
          </svg>

          <section class="win rec">
            <header class="win-title">
              <svg class="win-ic"><use href="#r-cine"/></svg>
              <span class="rec-title">屏幕录像专家 V2016</span>
              <div class="win-caps">
                <span class="wcap"><i class="g-min"></i></span><span class="wcap"><i class="g-max"></i></span><span class="wcap g-x">✕</span>
              </div>
            </header>
            <div class="client">
              <nav class="rec-menu">
                <span>文件(F)</span><span>编辑(E)</span><span>合成截取(J)</span><span>转换工具(T)</span><span>录像模式(L)</span><span>生成模式(S)</span><span>帮助(H)</span>
              </nav>
              <div class="rec-tools">
                <i class="grip-v"></i>
                <svg class="r-ic wide"><use href="#r-new"/></svg><i class="sep"></i>
                <svg class="r-ic"><use href="#r-rec"/></svg><svg class="r-ic"><use href="#r-pause"/></svg><svg class="r-ic"><use href="#r-stop"/></svg><svg class="r-ic"><use href="#r-cam"/></svg><svg class="r-ic"><use href="#r-pen"/></svg><i class="sep"></i>
                <svg class="r-ic"><use href="#r-globe"/></svg><svg class="r-ic"><use href="#r-mail"/></svg><svg class="r-ic"><use href="#r-help"/></svg><i class="sep"></i>
                <span class="pyg">PYG解密小组作品</span><i class="sep"></i>
                <span class="www">www.chinapyg.com</span><i class="sep"></i>
                <i class="grip-v"></i><i class="rec-monitor"></i>
              </div>
              <div class="rec-top">
                <div class="tabs">
                  <span class="tab">基本设置</span><i class="tab-sep"></i><span class="tab tab-on">录制目标</span>
                  <span class="tab tab-far">其它设置</span><i class="tab-sep"></i>
                </div>
                <div class="rec-cols">
                  <div class="rec-form">
                    <label class="opt"><i class="radio"></i>全屏<span class="btn btn-dual">双屏</span></label>
                    <label class="opt"><i class="radio"></i>窗口<span class="btn btn-pick off">选择窗口</span></label>
                    <label class="opt"><i class="check"></i>同时录摄像头</label>
                    <label class="opt"><i class="radio"></i>摄像头</label>
                    <div class="form-btns"><span class="btn off">设置</span><span class="btn off">属性</span><span class="btn off">预览</span></div>
                  </div>
                  <div class="rec-side">
                    <p class="side-hint">(可直接拖动调整)</p>
                    <div class="side-row"><div class="side-box">化</div><span class="btn btn-note">说明</span></div>
                    <p class="side-label">实时监控窗体</p>
                  </div>
                </div>
              </div>
              <div class="rec-bottom">
                <div class="rec-left">
                  <div class="list-head">录像模式</div>
                  <div class="list">
                    <div class="list-row"><svg class="doc"><use href="#doc"/></svg><span>录像1.lxe</span></div>
                  </div>
                </div>
                <div class="rec-right">
                  <div class="path-input"></div>
                  <div class="preview">
                    <div class="shot">
                      <div class="banner"><p class="b-one">菜单(转AV</p><p class="b-two">转MP3编码</p></div>
                      <div class="strip"><svg class="s-ic"><use href="#laycur"/></svg><svg class="s-ic"><use href="#laypre"/></svg><svg class="s-ic"><use href="#laywin"/></svg><i class="grip-v"></i><i class="strip-box"></i></div>
                      <div class="shot-low">
                        <div class="mini-bar"><i class="grip-h"></i><svg class="s-ic"><use href="#line"/></svg></div>
                        <div class="mini-bar"><i class="grip-h"></i><svg class="s-ic"><use href="#erase"/></svg></div>
                        <div class="mini-bar"><i class="grip-h"></i><svg class="s-ic"><use href="#dlin"/></svg></div>
                        <div class="shot-black"></div>
                      </div>
                    </div>
                    <div class="vbar"><span class="sb-btn">▲</span><span class="sb-thumb"></span><span class="sb-btn sb-end">▼</span></div>
                    <div class="hbar"><span class="sb-btn">◀</span><span class="sb-hthumb"></span><span class="sb-btn sb-right">▶</span></div>
                  </div>
                </div>
              </div>
              <div class="rec-status"><span>录像长度:00:00:27总帧数:135,速度:5帧/秒,宽度:1352,高度:720,文件大小:922KB,创建</span><i class="size-grip"></i></div>
            </div>
          </section>

          <section class="win gif">
            <header class="win-title gif-title">
              <span>EXE转成GIF</span>
              <span class="wcap g-x gif-x">✕</span>
            </header>
            <div class="gif-client">
              <div class="file-row">
                <span>文件名:</span>
                <div class="file-input">C:\Users\zhazb\Desktop\屏幕录像</div>
                <span class="btn btn-browse">浏览</span>
              </div>
              <div class="group group-rate">
                <div class="rate">5帧/秒</div>
                <label class="opt"><i class="check"></i>自动扩帧<i class="rate-input"></i></label>
              </div>
              <div class="group group-trans">
                <div class="legend"><label class="opt legend-a"><i class="check"></i>使用透明色</label><span class="legend-b">透明色</span></div>
                <div class="corners">
                  <label class="opt corner-a"><i class="radio on"></i>左上角</label>
                  <label class="opt corner-b"><i class="radio"></i></label>
                  <label class="opt corner-c"><i class="radio"></i>左下角</label>
                </div>
              </div>
              <p class="gif-note">Gif文件是不带声音的动画文件如要声音请输出，建议转录像的<br>分辨率尽量低(尽量以范围方式录制尽量小的范围),时间长度尽<br>量短,总帧数建议不要超过500帧</p>
              <div class="gif-btns">
                <span class="btn btn-help">说明</span>
                <span class="btn btn-conv">转换(Z)</span>
                <span class="btn btn-close">关闭(C)</span>
              </div>
            </div>
          </section>

          <section class="win msg">
            <header class="win-title msg-title">
              <span>屏幕录像专家</span>
              <span class="msg-x">✕</span>
            </header>
            <div class="msg-client">
              <p class="msg-text">lg error</p>
              <div class="msg-ok"><span>OK</span></div>
            </div>
          </section>
        </div>
        <div class="vscroll"><span class="up">▲</span><i class="thumb"></i></div>
      </div>
      <div class="layout-tabs">
        <div class="nav"><span>|◀</span><span>◀</span><span>▶</span><span>▶|</span></div>
        <span class="lt lt-on">模型</span><i class="slash"></i><span class="lt">布局1</span><i class="slash"></i><span class="lt">布局2</span><i class="slash"></i>
        <div class="hscroll"><i class="thumb-h"></i><span>▶</span></div>
      </div>
    </main>
  </div>

  <div class="cmd-head"></div>
  <div class="cmd">
    <i class="grip-v"></i>
    <div class="cmd-body">
      <div class="cmd-hist">指定端点切向:</div>
      <div class="cmd-line">命令:</div>
    </div>
    <div class="cmd-scroll">
      <div class="cmd-v"><span>▲</span><span>▼</span></div>
      <div class="cmd-h"><span>◀</span><i class="thumb-h"></i><span>▶</span></div>
    </div>
  </div>

  <footer class="status">
    <pre class="coords">116.9930&lt;  338      ,  0.0000</pre>
    <div class="modes">
      <span>捕捉</span><span>栅格</span><span>正交</span><span>极轴</span><span>对象捕捉</span><span>对象追踪</span><span class="m-latin w-28">DUCS</span><span class="m-latin w-22">DYN</span><span>线宽</span><span class="mode-on">模型</span>
    </div>
    <div class="tray">
      <span class="scale-label">注释比例:</span><span class="scale-val">1:1</span><b class="drop"></b>
      <svg class="tray-ic"><use href="#sat"/></svg><svg class="tray-ic"><use href="#r-pen"/></svg>
      <span class="tray-lock"><svg class="tray-ic"><use href="#lock"/></svg></span>
    </div>
  </footer>

  <i class="ghost g-tl"></i><i class="ghost g-tlv"></i><i class="ghost g-tr"></i><i class="ghost g-trv"></i>
  <i class="ghost g-bl"></i><i class="ghost g-blv"></i><i class="ghost g-br"></i><i class="ghost g-brv"></i><i class="g-sq"></i>
</div>
</body>
</html>
```

FILE: styles.css
```css
html,body{margin:0;padding:0;}
body{width:1359px;height:731px;overflow:hidden;background:#f0f0f0;font-family:"Noto Sans CJK SC","Noto Sans",sans-serif;font-size:12px;color:#111;}
p{margin:0;}
i,b{font-style:normal;display:block;}
label{display:flex;align-items:center;}
.sprite{position:absolute;}
.app{position:relative;display:flex;flex-direction:column;width:1359px;height:731px;overflow:hidden;}
.mono{font-family:"Liberation Mono",monospace;font-size:10px;color:#111;}

/* top title + menu */
.titlebar{display:flex;align-items:flex-start;height:20px;flex:none;background:linear-gradient(#b6c8d9,#d3e0ed);}
.cad-ic{width:13px;height:16px;margin-right:10px;flex:none;}
.app-title{font-family:"Noto Sans",sans-serif;font-size:15.500px;line-height:20px;color:#4a4a4a;white-space:nowrap;}
.caps{display:flex;gap:3px;margin-left:auto;}
.cap{display:flex;align-items:center;justify-content:center;width:32px;height:16px;border:1px solid #7f93ad;border-top:0;border-radius:0 0 3px 3px;box-sizing:border-box;background:linear-gradient(#c4d2df,#b3c4d6);}
.g-x{color:#fff;font-size:11px;font-weight:700;text-shadow:0 0 1px #333,0 0 1px #333;}
.g-min{width:10px;height:4px;background:#e8edf2;border:1px solid #444;}
.g-res{width:8px;height:8px;border:1px solid #333;background:#dfe6ee;box-shadow:2px -2px 0 -1px #dfe6ee,2px -2px 0 0 #333;}
.g-max{width:8px;height:6px;border:1px solid #333;border-top-width:2px;background:#dfe6ee;}

.menubar{display:flex;align-items:center;height:21px;flex:none;background:linear-gradient(#fff,#d6daee);}
.doc-ic{width:16px;height:16px;margin-left:3px;flex:none;}
.menu-items{display:flex;gap:15px;margin-left:7px;font-size:14px;letter-spacing:.5px;color:#5a5a5a;white-space:nowrap;}
.search{display:flex;align-items:center;height:19px;width:332px;margin-left:auto;box-sizing:border-box;border:1px solid #c6ccd4;background:#f1f1f1;border-radius:2px;}
.search-text{margin-left:3px;font-size:12px;color:#666;}
.search-btns{display:flex;align-items:center;gap:2px;height:17px;margin-left:auto;padding:0 2px 0 4px;border-left:1px solid #aab;border-radius:6px;background:#f6f6f6;}
.mini{width:14px;height:14px;margin-right:1px;}
.mini-drop{width:0;height:0;margin:0 5px;border:3px solid transparent;border-top-color:#333;border-bottom:0;}
.mdi{display:flex;gap:1px;width:62px;margin-left:5px;}
.mdi-btn{display:flex;align-items:center;justify-content:center;width:20px;height:19px;box-sizing:border-box;border:1px solid #a9bfd8;background:linear-gradient(#e4ecf7,#c9d8ea);color:#8896a8;font-size:11px;}

/* toolbars */
.tool-row{display:flex;flex:none;background:#f0f0f0;}
.row-one{height:28px;margin-top:2px;align-items:flex-start;}
.row-two{height:27px;border-bottom:2px solid #8c8c8c;}
.tb{display:flex;align-items:center;height:26px;box-sizing:border-box;border-right:1px solid #a8a8a8;border-bottom:1px solid #a8a8a8;}
.ic{width:20px;height:20px;padding:0 1.500px;flex:none;}
.sep{width:1px;height:17px;margin:0 3px;background:#8f8f8f;flex:none;}
.tb-std{width:645px;margin-left:3px;padding:1px 0 0 2.500px;border-left:3px double #a8a8a8;}
.tb-ucs{width:345px;margin-left:3px;padding:1px 0 0 9.700px;border-left:3px double #a8a8a8;}
.tb-ucs .ic{padding:0 1.300px;}
.tb-ucs .sep{margin:0 2.800px;}
.tb-std .drop{margin:0 3px;border:3px solid transparent;border-top:4px solid #1d2f7a;border-bottom:0;}
.tb-std .drop.off{border-top-color:#aaa;}
.drop{width:0;height:0;border:4px solid transparent;border-top:5px solid #111;border-bottom:0;flex:none;}
.drop.off{border-top-color:#aaa;}
.combo .drop{margin-left:auto;}
.tb-layer{width:402px;height:27px;margin-left:3px;padding:2px 0 0 2.500px;border-left:3px double #a8a8a8;border-bottom:0;}
.tb-props{flex:1;max-width:586px;height:27px;gap:6px;margin-left:3px;padding:2px 0 0 8px;border-left:3px double #a8a8a8;border-right:0;border-bottom:0;}
.combo{display:flex;align-items:center;gap:4px;height:22px;box-sizing:border-box;padding:0 4px;background:#fff;border:1px solid #c8c8c8;border-radius:2px;}
.combo-layer{width:299px;margin:0 0 0 2px;padding-left:1px;gap:1px;}
.st{width:16px;height:16px;flex:none;}
.swatch{width:10px;height:10px;border:1px solid #111;flex:none;background:#fff;}
.combo-layer .mono{margin-left:3px;}
.combo-color{width:149px;gap:2px;}
.combo-ltype{width:160px;}
.combo-lweight{width:125px;}
.combo-plot{width:119px;background:#f0f0f0;}
.rule{height:1px;background:#111;flex:none;}
.rule-long{width:60px;}
.rule-short{width:35px;}
.plot-text{flex:1;padding-left:5px;background:#e9e9e9;font-size:13px;line-height:19px;color:#888;}

/* dock */
.workspace{display:flex;height:550px;flex:none;}
.dock{display:flex;gap:2px;width:75px;flex:none;box-sizing:border-box;border-right:1px solid #666;align-items:flex-start;background:#f0f0f0;}
.dockbar{display:flex;flex-direction:column;align-items:center;border-right:1px solid #a8a8a8;border-bottom:1px solid #a8a8a8;box-sizing:border-box;}
.dockbar .ic{width:20px;height:20px;padding:1px 0;flex:none;}
.bar-draw{width:20px;height:433px;}
.bar-draw .ic{margin-left:-5px;}
.bar-modify{width:24px;height:389px;}
.bar-dim{width:24px;height:507px;}
.grip-h{width:90%;height:5px;margin:2px 0 1px;border-top:1px solid #aaa;border-bottom:1px solid #aaa;}
.sep-h{width:19px;height:1px;margin:3px 0 2px;background:#aaa;}
.ic-a{margin-left:-5px;font-family:"Liberation Sans",sans-serif;font-size:19px;line-height:22px;color:#111;}

/* drawing */
.drawing{display:flex;flex-direction:column;flex:1;min-width:0;}
.view-row{display:flex;height:533px;}
.canvas{position:relative;flex:1;background:#000;overflow:hidden;}
.geometry{position:absolute;left:0;top:0;}
.axis{font-family:"Liberation Sans",sans-serif;font-size:15px;fill:#fff;}
.vscroll{display:flex;flex-direction:column;align-items:center;width:15px;flex:none;background:#f4f4f4;}
.up{font-size:7px;line-height:19px;margin-left:4px;color:#333;}
.thumb{width:12px;height:14px;border:1px solid #111;border-radius:2px;background:linear-gradient(90deg,#eee,#555);}
.layout-tabs{display:flex;align-items:flex-start;height:17px;border-left:1px solid #888;background:#f0f0f0;font-size:12px;}
.nav{display:flex;width:56px;margin-left:1px;height:15px;color:#777;font-size:8px;line-height:15px;text-align:center;}
.nav span{flex:1;border-right:1px solid #ccc;}
.lt{padding:0 6px;line-height:16px;white-space:nowrap;}
.lt-on{width:26px;padding:0 9px 0 8px;margin-left:1px;height:16px;text-align:center;color:#fff;background:#000;clip-path:polygon(0 0,100% 0,90% 100%,14% 100%);}
.slash{width:1px;height:15px;background:#333;transform:skewX(-28deg);}
.hscroll{display:flex;align-items:center;gap:6px;height:14px;margin-left:auto;margin-top:2px;margin-right:19px;font-size:8px;color:#555;}
.thumb-h{width:13px;height:12px;border:1px solid #111;border-radius:2px;background:linear-gradient(#eee 30%,#444 70%);}

/* window chrome on the canvas */
.win{position:absolute;box-sizing:border-box;border:1px solid #33383e;border-radius:5px 5px 0 0;background:linear-gradient(#a8bed2,#cfdfef 12%,#dbe7f5);}
.win-title{display:flex;align-items:center;height:30px;font-size:15px;color:#555;}
.rec{left:300px;top:55px;width:608px;height:451px;padding:0 6px;}
.win-ic{width:22px;height:18px;flex:none;margin-left:-1px;}
.rec-title{font-size:15.500px;}
.win-caps{display:flex;gap:3px;margin:0 5px 0 auto;}
.wcap{display:flex;align-items:center;justify-content:center;width:31px;height:17px;box-sizing:border-box;border:1px solid #6f8299;border-radius:3px;background:linear-gradient(#c8d4e0,#b3c4d6);}
.client{display:flex;flex-direction:column;height:415px;background:#f0f0f0;}
.rec-menu{display:flex;gap:16px;height:21px;padding-left:6px;background:linear-gradient(#fff,#d6daee);font-size:14px;letter-spacing:.3px;line-height:20px;color:#5a5a5a;white-space:nowrap;}
.rec-tools{display:flex;align-items:center;height:28px;box-sizing:border-box;padding-left:5px;border-top:1px solid #fff;border-bottom:1px solid #aaa;}
.grip-v{width:2px;height:20px;border-left:1px solid #aaa;border-right:1px solid #aaa;flex:none;}
.r-ic{width:20px;height:20px;margin:0 1.500px;flex:none;}
.r-ic.wide{width:24px;margin-left:0;}
.pyg{margin:0 17px 0 32px;font-size:11.600px;color:#0000f0;white-space:nowrap;}
.www{margin-left:11px;width:138px;font-family:"Liberation Mono",monospace;font-size:10px;color:#0000e0;}
.rec-tools .sep{height:18px;margin:0 3px;}
.rec-monitor{width:40px;height:22px;margin-left:4px;background:#0a0008;flex:none;}
.rec-top{display:flex;flex-direction:column;height:147px;box-sizing:border-box;border-right:1px solid #999;border-bottom:2px solid #999;margin-right:1px;}
.tabs{display:flex;align-items:center;height:30px;padding:0 0 0 11px;}
.tab{font-size:12px;white-space:nowrap;}
.tab-sep{width:1px;height:19px;margin:0 10px;background:#999;}
.tab-on{padding:0 4px;line-height:18px;margin-left:-3px;border:1px solid #888;background:#eee;}
.tab-far{margin-left:auto;}
.tabs .tab-sep:last-child{margin-right:55px;}
.rec-cols{display:flex;justify-content:space-between;flex:1;}
.rec-form{width:116px;padding-left:25px;box-sizing:border-box;white-space:nowrap;}
.opt{gap:5px;height:23px;font-size:12px;white-space:nowrap;}
.radio{width:10px;height:10px;flex:none;border-radius:50%;box-sizing:content-box;background:#fff;border:1px solid #bbb;box-shadow:-1px -1px 0 #999;}
.radio.on{background:radial-gradient(circle,#111 30%,#fff 36%);}
.check{width:10px;height:10px;flex:none;background:#fff;border:1px solid #ddd;box-shadow:inset 1px 1px 0 #777;}
.rec-form .opt:nth-child(1){height:25px;margin-top:4px;}
.rec-form .opt:nth-child(2){height:21px;}
.rec-form .opt:nth-child(3){height:20px;}
.rec-form .opt:nth-child(4){height:18px;}
.btn{display:flex;align-items:center;justify-content:center;box-sizing:border-box;font-size:12px;background:#f0f0f0;border:1px solid;border-color:#fff #666 #666 #fff;box-shadow:inset -1px -1px 0 #aaa,1px 1px 0 #888;white-space:nowrap;}
.btn.off{color:#999;border-color:#fff #aaa #aaa #fff;box-shadow:inset -1px -1px 0 #ccc;}
.btn-dual{width:40px;height:17px;margin-left:7px;}
.btn-pick{width:62px;height:17px;margin-left:1px;flex:none;}
.form-btns{display:flex;gap:8px;height:18px;margin:4px 0 0 -16px;}
.form-btns .btn{width:32px;}
.rec-side{display:flex;flex-direction:column;width:114px;}
.side-hint{margin:16px 0 0 3px;font-size:12px;line-height:18px;white-space:nowrap;}
.side-row{display:flex;align-items:flex-end;gap:8px;margin-top:3px;}
.side-box{width:50px;height:53px;box-sizing:border-box;border:1px solid #aaa;border-left:0;display:flex;align-items:flex-end;line-height:18px;font-size:12px;}
.btn-note{width:48px;height:17px;}
.side-label{margin-top:3px;font-size:12px;line-height:16px;}
.rec-bottom{display:flex;height:199px;padding:0 3px 0 2px;gap:5px;}
.rec-left{width:134px;flex:none;}
.list-head{height:17px;padding-left:6px;font-size:12px;line-height:19px;border-bottom:2px solid #999;margin-bottom:2px;}
.list{height:174px;box-sizing:border-box;background:#fff;border:1px solid #888;border-right-color:#ddd;border-bottom-color:#ddd;}
.list-row{display:flex;align-items:center;gap:6px;height:16px;margin-top:1px;padding-left:3px;background:#06315f;color:#fff;font-size:10px;}
.list-row span{font-size:11px;letter-spacing:.3px;}
.doc{width:12px;height:14px;}
.rec-right{flex:1;padding-top:28px;min-width:0;}
.path-input{height:18px;margin:-1px 5px 4px 90px;background:#fff;border:1px solid #ddd;box-sizing:border-box;}
.preview{display:grid;grid-template-columns:432px 17px;grid-template-rows:128px 17px;background:#f5f5f5;}
.shot{display:flex;flex-direction:column;min-width:0;overflow:hidden;background:#f5f2f5;}
.banner{height:82px;box-sizing:border-box;border-top:2px solid #f00;border-bottom:2px solid #f00;background:#fff;color:#00f;font-weight:700;font-size:18px;line-height:21px;white-space:nowrap;}
.b-one{padding:10px 0 0 335px;letter-spacing:2px;}
.b-two{padding-left:329px;letter-spacing:1px;}
.strip{display:flex;align-items:center;justify-content:flex-end;gap:5px;height:13px;overflow:hidden;background:#f6f0f4;}
.s-ic{width:18px;height:18px;flex:none;}
.strip-box{width:10px;height:13px;background:#fff;}
.strip .grip-v{margin:0 10px 0 6px;}
.shot-low{display:flex;flex:1;gap:1px;margin-left:-3px;}
.mini-bar{display:flex;flex-direction:column;align-items:center;width:25px;flex:none;background:#f6f0f4;}
.mini-bar .s-ic{margin-top:2px;}
.shot-black{flex:1;margin-left:1px;background:#000;}
.vbar{display:flex;flex-direction:column;grid-row:1;grid-column:2;}
.hbar{display:flex;grid-row:2;grid-column:1;}
.sb-btn{display:flex;align-items:center;justify-content:center;width:17px;height:17px;flex:none;box-sizing:border-box;font-size:7px;background:#f0f0f0;border:1px solid;border-color:#fff #777 #777 #fff;}
.sb-thumb{height:17px;margin-top:1px;background:#f0f0f0;border:1px solid;border-color:#fff #999 #999 #fff;box-sizing:border-box;}
.sb-end{margin-top:auto;}
.sb-hthumb{width:126px;background:#f0f0f0;border:1px solid;border-color:#fff #999 #999 #fff;box-sizing:border-box;}
.sb-right{margin-left:auto;}
.rec-status{display:flex;align-items:center;justify-content:space-between;height:19px;box-sizing:border-box;padding-left:1px;border:1px solid #aaa;border-right-color:#eee;border-bottom-color:#eee;font-size:14px;white-space:nowrap;color:#222;}
.rec-status span{letter-spacing:.82px;}
.size-grip{width:12px;height:12px;background:repeating-linear-gradient(135deg,#f0f0f0 0 2px,#999 2px 3px);clip-path:polygon(100% 0,100% 100%,0 100%);}

/* exe to gif dialog */
.gif{left:423px;top:138px;width:362px;height:287px;padding:0 2px 2px;}
.gif-title{height:25px;justify-content:space-between;padding-left:5px;font-size:15px;color:#667;}
.gif-x{margin-right:4px;}
.gif-client{height:257px;padding:7px 12px 0 9px;box-sizing:border-box;background:#f0f0f0;}
.file-row{display:flex;align-items:center;height:20px;font-size:13px;}
.file-row>span:first-child{width:55px;letter-spacing:1px;}
.file-input{width:216px;height:20px;box-sizing:border-box;padding-left:1px;background:#fff;border:1px solid;border-color:#777 #eee #eee #777;font-family:"Liberation Mono","Noto Sans CJK SC",monospace;font-size:12px;line-height:18px;white-space:nowrap;overflow:hidden;}
.btn-browse{width:57px;height:20px;margin-left:8px;}
.group{box-sizing:border-box;border:1px solid #c6c6c6;border-right-color:#e6e6e6;border-bottom-color:#e6e6e6;}
.group-rate{height:69px;margin-top:9px;padding:7px 0 0 6px;}
.rate{font-size:12px;line-height:18px;padding-left:2px;}
.group-rate .opt{margin-top:3px;gap:5px;letter-spacing:.7px;}
.rate-input{width:10px;height:18px;margin-left:8px;border:1px solid #888;}
.group-trans{height:52px;margin-top:11px;padding:0 0 0 6px;}
.legend{display:flex;height:12px;margin-top:-7px;}
.legend-a{height:16px;gap:5px;padding-right:2px;background:#f0f0f0;}
.legend-b{margin-left:160px;padding:0 5px 0 0;background:#f0f0f0;line-height:16px;}
.corners{display:flex;margin-top:10px;}
.corner-a{width:80px;margin-left:2px;gap:4px;}
.corner-b{width:159px;}
.corner-c{gap:5px;}
.gif-note{margin:7px 0 0 -1px;font-size:12px;line-height:12px;letter-spacing:.2px;white-space:nowrap;}
.gif-btns{display:flex;align-items:center;margin:12px 0 0 21px;}
.btn-help{width:65px;height:18px;}
.btn-conv{width:72px;height:24px;margin-left:25px;border:2px solid #666;box-shadow:none;}
.btn-close{width:72px;height:24px;margin-left:11px;}

/* message box */
.msg{left:527px;top:206px;width:154px;height:151px;padding:0 3px 3px 2px;background:linear-gradient(#94b0d0,#b8d4ee 20%,#5fb8e6 22%,#5fb8e6);}
.msg-title{height:25px;justify-content:space-between;padding-left:4px;font-size:14px;color:#111;}
.msg-x{display:flex;align-items:center;justify-content:center;width:31px;height:17px;box-sizing:border-box;margin-right:1px;color:#fff;font-size:11px;font-weight:700;border:1px solid #6a2020;border-radius:2px;background:linear-gradient(#e08878,#b93a26);text-shadow:0 0 1px #333;}
.msg-client{height:121px;padding:20px 16px 0 17px;box-sizing:border-box;background:#f0f0f0;}
.msg-text{font-family:"Noto Sans",sans-serif;font-size:15px;line-height:20px;color:#333;}
.msg-ok{display:flex;align-items:center;justify-content:center;width:113px;height:35px;margin-top:25px;box-sizing:border-box;border:2px solid #777;border-right-width:3px;border-bottom-width:3px;background:#f0f0f0;}
.msg-ok span{display:flex;align-items:center;justify-content:center;width:102px;height:25px;font-family:"Noto Sans",sans-serif;font-size:16px;color:#222;border:1px dotted #111;}

/* command + status */
.cmd-head{height:15px;flex:none;box-sizing:border-box;background:#f0f0f0;border-top:4px solid #fff;box-shadow:inset 0 1px 0 #777;}
.cmd{display:flex;height:48px;flex:none;box-sizing:border-box;padding-left:5px;background:#f0f0f0;border-bottom:3px solid #fff;}
.cmd .grip-v{height:43px;width:3px;margin-right:2px;}
.cmd-body{flex:1;border-top:1px solid #777;border-left:1px solid #777;background:#fff;}
.cmd-hist{height:24px;box-sizing:border-box;padding-left:2px;border-bottom:1px solid #aaa;font-size:14px;line-height:16px;}
.cmd-line{height:19px;padding-left:2px;font-size:14px;line-height:20px;letter-spacing:1.500px;border-bottom:1px solid #aaa;box-sizing:border-box;}
.cmd-scroll{width:0;position:relative;}
.cmd-v{position:absolute;right:6px;top:4px;display:flex;flex-direction:column;gap:3px;font-size:7px;line-height:9px;color:#555;}
.cmd-h{position:absolute;right:26px;top:27px;width:54px;display:flex;align-items:center;justify-content:space-between;font-size:8px;color:#555;background:#f0f0f0;}
.status{display:flex;align-items:flex-start;height:18px;flex:none;box-sizing:border-box;padding-top:3px;background:#f0f0f0;}
.coords{width:185px;margin:0 0 0 2px;font-family:"Liberation Mono",monospace;font-size:10px;box-sizing:border-box;border-right:1px solid #999;color:#222;line-height:18px;flex:none;}
.modes{display:flex;gap:4px;margin-left:3px;}
.modes span{height:18px;padding:0 1px;box-sizing:border-box;border:1px solid;border-color:#fff #aaa #aaa #fff;font-size:12px;line-height:17px;white-space:nowrap;}
.modes .m-latin{font-family:"Liberation Mono",monospace;font-size:9px;text-align:center;}
.modes .w-28{width:28px;padding:0;}
.modes .w-22{width:22px;padding:0;}
.modes .mode-on{border-color:#333 #fff #fff #333;}
.tray{display:flex;align-items:center;margin-left:auto;margin-right:39px;}
.scale-label{font-size:12px;margin-right:11px;}
.scale-val{font-family:"Liberation Mono",monospace;font-size:11px;margin-right:4px;}
.tray-ic{width:16px;height:16px;margin-left:9px;flex:none;}
.tray-lock{display:flex;align-items:center;justify-content:center;width:24px;height:16px;margin-left:4px;border:1px solid #ccc;box-sizing:border-box;}
.tray-lock .tray-ic{margin:0;}

/* green leftovers of the screen recorder */
.ghost{position:absolute;background:#5fae72;opacity:.85;}
.g-tl{left:0;top:0;width:24px;height:4px;}
.g-tlv{left:0;top:0;width:1px;height:36px;}
.g-tr{left:1321px;top:0;width:35px;height:4px;}
.g-trv{left:1352px;top:0;width:4px;height:38px;}
.g-bl{left:0;top:725px;width:28px;height:6px;}
.g-blv{left:0;top:695px;width:1px;height:36px;}
.g-br{left:1321px;top:725px;width:36px;height:6px;}
.g-brv{left:1353px;top:695px;width:5px;height:36px;}
.g-sq{position:absolute;left:1342px;top:716px;width:14px;height:14px;border:1px solid #1d5f6e;background:#a9cbe0;}
```
